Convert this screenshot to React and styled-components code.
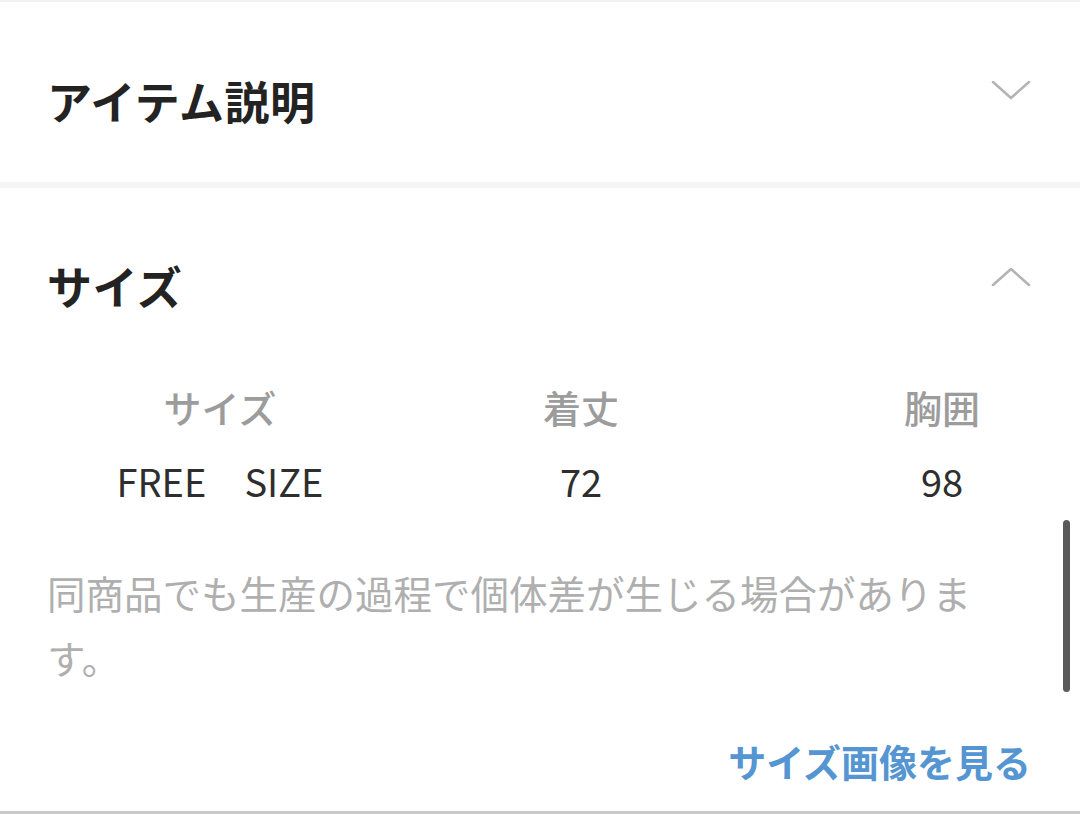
import React from 'react'
import styled, { createGlobalStyle } from 'styled-components'

const GlobalStyle = createGlobalStyle`
  html, body {
    margin: 0;
    padding: 0;
    background: #ffffff;
  }
  body {
    width: 1080px;
    height: 814px;
    overflow: hidden;
    font-family: 'Noto Sans CJK JP', 'Noto Sans', sans-serif;
  }
`

const sizeRows = [
  { label: 'サイズ', value: 'FREE\u3000SIZE' },
  { label: '着丈', value: '72' },
  { label: '胸囲', value: '98' },
]

const Chevron = ({ up }) => (
  <ChevronIcon viewBox="0 0 40 20" width="40" height="20" fill="none">
    <path
      d={up ? 'M2 19 L20 3 L38 19' : 'M2 1 L20 17 L38 1'}
      stroke="#b4b4b4"
      strokeWidth="2.6"
      strokeLinecap="round"
      strokeLinejoin="round"
    />
  </ChevronIcon>
)

const App = () => {
  return (
    <Page>
      <GlobalStyle />
      <Section>
        <SectionHeader pt={76} pb={59}>
          <SectionTitle>アイテム説明</SectionTitle>
          <Chevron />
        </SectionHeader>
      </Section>
      <Divider />
      <Section>
        <SectionHeader pt={75} pb={0}>
          <SectionTitle>サイズ</SectionTitle>
          <Chevron up />
        </SectionHeader>
        <SizeTable>
          {sizeRows.map((r) => (
            <HeadCell key={r.label}>{r.label}</HeadCell>
          ))}
          {sizeRows.map((r) => (
            <ValueCell key={r.label}>{r.value}</ValueCell>
          ))}
        </SizeTable>
        <Note>同商品でも生産の過程で個体差が生じる場合があります。</Note>
        <LinkRow>
          <SizeLink href="#">サイズ画像を見る</SizeLink>
        </LinkRow>
      </Section>
      <ScrollThumb />
    </Page>
  )
}

const Page = styled.div`
  position: relative;
  width: 1080px;
  height: 814px;
  box-sizing: border-box;
  border-top: 2px solid #f2f2f2;
  border-bottom: 3px solid #c9c9c9;
  overflow: hidden;
  background: #ffffff;
`
const Section = styled.section`
  display: flex;
  flex-direction: column;
`
const SectionHeader = styled.div`
  display: flex;
  justify-content: space-between;
  align-items: flex-start;
  padding: ${({ pt }) => pt}px 49px ${({ pb }) => pb}px 47px;
`
const SectionTitle = styled.h2`
  margin: 0;
  font-size: 45px;
  line-height: 1;
  font-weight: 700;
  color: #232323;
  letter-spacing: 0.5px;
`
const ChevronIcon = styled.svg`
  display: block;
  margin-top: 3px;
`
const Divider = styled.div`
  height: 6px;
  background: #f5f5f5;
`
const SizeTable = styled.div`
  display: grid;
  grid-template-columns: repeat(3, 240px);
  column-gap: 121px;
  row-gap: 36px;
  padding-left: 100px;
  margin-top: 80px;
`
const HeadCell = styled.div`
  text-align: center;
  font-size: 38px;
  line-height: 1;
  color: #9c9c9c;
  font-weight: 500;
`
const ValueCell = styled.div`
  text-align: center;
  font-size: 38px;
  line-height: 1;
  color: #2e2e2e;
  font-weight: 400;
`
const Note = styled.p`
  margin: 60px 0 0;
  padding: 0 100px 0 47px;
  font-size: 38.5px;
  line-height: 65px;
  color: #afafaf;
  font-weight: 400;
`
const LinkRow = styled.div`
  display: flex;
  justify-content: flex-end;
  padding: 0 49px 0 47px;
  margin-top: 52px;
`
const SizeLink = styled.a`
  font-size: 38px;
  line-height: 1;
  font-weight: 700;
  color: #5495d2;
  text-decoration: none;
`
const ScrollThumb = styled.div`
  position: absolute;
  right: 10px;
  top: 518px;
  width: 7px;
  height: 172px;
  border-radius: 4px;
  background: #5a5a5a;
`

export default App
